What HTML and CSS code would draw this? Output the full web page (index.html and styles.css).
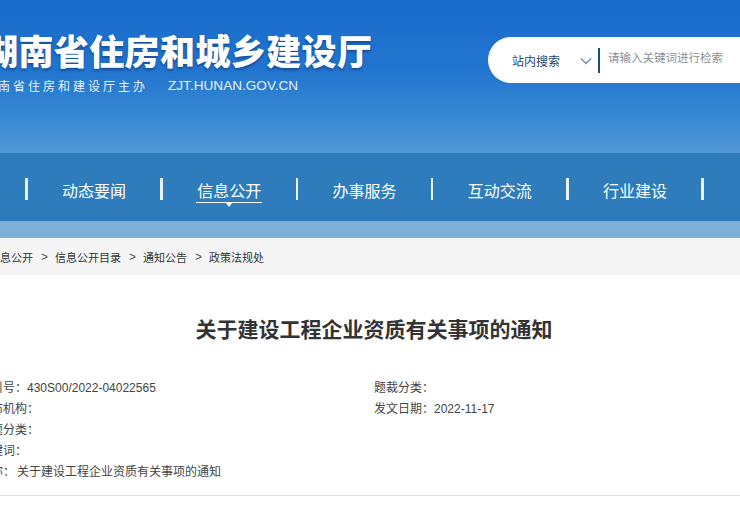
FILE: index.html
```html
<!DOCTYPE html>
<html lang="zh-CN">
<head>
<meta charset="utf-8">
<title>关于建设工程企业资质有关事项的通知</title>
<link rel="stylesheet" href="styles.css">
</head>
<body>
<header class="header">
  <div class="brand">
    <div class="site-title">湖南省住房和城乡建设厅</div>
    <div class="site-sub"><span class="sub-cn">湖南省住房和建设厅主办</span><span class="sub-url">ZJT.HUNAN.GOV.CN</span></div>
  </div>
  <div class="search">
    <span class="scope">站内搜索</span>
    <svg class="chev" width="12" height="8" viewBox="0 0 12 8"><path d="M1 1.5 L6 6.5 L11 1.5" fill="none" stroke="#6f8aa3" stroke-width="1.3"/></svg>
    <span class="divider"></span>
    <span class="placeholder">请输入关键词进行检索</span>
  </div>
</header>
<nav class="nav">
  <span class="sep"></span>
  <a class="nav-item"><span class="nav-text">动态要闻</span></a>
  <span class="sep"></span>
  <a class="nav-item active"><span class="nav-text">信息公开</span></a>
  <span class="sep"></span>
  <a class="nav-item"><span class="nav-text">办事服务</span></a>
  <span class="sep"></span>
  <a class="nav-item"><span class="nav-text">互动交流</span></a>
  <span class="sep"></span>
  <a class="nav-item"><span class="nav-text">行业建设</span></a>
  <span class="sep"></span>
</nav>
<div class="nav-band"></div>
<div class="crumbs">
  <span>信息公开</span><span class="gt">&gt;</span><span>信息公开目录</span><span class="gt">&gt;</span><span>通知公告</span><span class="gt">&gt;</span><span>政策法规处</span>
</div>
<main class="article">
  <h1 class="title">关于建设工程企业资质有关事项的通知</h1>
  <div class="meta">
    <div class="meta-col">
      <div class="row">索引号：<span class="num">430S00/2022-04022565</span></div>
      <div class="row">发布机构：</div>
      <div class="row">主题分类：</div>
      <div class="row">关键词：</div>
      <div class="row">名称：<span class="val">关于建设工程企业资质有关事项的通知</span></div>
    </div>
    <div class="meta-col">
      <div class="row">题裁分类：</div>
      <div class="row">发文日期：<span class="num">2022-11-17</span></div>
    </div>
  </div>
</main>
</body>
</html>
```
FILE: styles.css
```css
html, body {
  margin: 0;
  padding: 0;
  overflow: hidden;
  background: #fff;
  font-family: "Liberation Sans", "Noto Sans CJK SC", sans-serif;
}

.header {
  height: 153px;
  display: flex;
  align-items: flex-start;
  overflow: hidden;
  background: linear-gradient(180deg, #196bcd 0%, #2275ce 45%, #3687d3 75%, #5198d5 100%);
}

.brand {
  margin-left: -17px;
  padding-top: 30px;
}

.site-title {
  font-family: "Noto Sans CJK SC", sans-serif;
  font-weight: 900;
  font-size: 35px;
  line-height: 40px;
  letter-spacing: 0.4px;
  color: #fff;
  text-shadow: 0 2px 3px rgba(10, 45, 110, 0.55);
  white-space: nowrap;
}

.site-sub {
  margin-top: 6px;
  height: 20px;
  line-height: 20px;
  color: #e6f0fb;
  white-space: nowrap;
  display: flex;
  align-items: center;
}

.sub-cn {
  font-family: "Noto Sans CJK SC", sans-serif;
  font-size: 12px;
  letter-spacing: 3px;
}

.sub-url {
  margin-left: 20px;
  font-family: "Liberation Sans", sans-serif;
  font-size: 13.6px;
  letter-spacing: 0;
}

.search {
  margin-left: auto;
  margin-right: -60px;
  margin-top: 37px;
  width: 312px;
  height: 46px;
  flex-shrink: 0;
  box-sizing: border-box;
  background: #fff;
  border-radius: 23px 0 0 23px;
  display: flex;
  align-items: center;
  padding-left: 24px;
  font-family: "Noto Sans CJK SC", sans-serif;
  font-size: 12px;
}

.scope {
  color: #25466d;
  width: 48px;
  white-space: nowrap;
  padding-top: 1px;
}

.chev {
  margin-left: 20px;
  margin-top: 1px;
}

.divider {
  margin-left: 6px;
  width: 2px;
  height: 25px;
  background: #1f4b77;
}

.placeholder {
  margin-left: 8px;
  color: #8a8f96;
  font-size: 11.5px;
  white-space: nowrap;
  padding-bottom: 7px;
}

.nav {
  height: 68px;
  box-sizing: border-box;
  padding-top: 4px;
  padding-left: 25px;
  background: #2e7cbb;
  display: flex;
  align-items: center;
}

.sep {
  width: 2.5px;
  height: 22px;
  background: #e9f2fa;
  flex-shrink: 0;
}

.nav-item {
  width: 132.8px;
  flex-shrink: 0;
  display: flex;
  justify-content: center;
  color: #fff;
  text-decoration: none;
}

.nav-text {
  position: relative;
  display: inline-block;
  font-family: "Noto Sans CJK SC", sans-serif;
  font-size: 16px;
  line-height: 22px;
  padding: 3px 1px 1px;
  border-bottom: 1.5px solid transparent;
  white-space: nowrap;
}

.nav-item.active .nav-text {
  border-bottom-color: #fff;
}

.nav-item.active .nav-text::after {
  content: "";
  position: absolute;
  left: 50%;
  bottom: -5.5px;
  margin-left: -3px;
  border-left: 3px solid transparent;
  border-right: 3px solid transparent;
  border-top: 4px solid #fff;
}

.nav-band {
  height: 17px;
  background: #7db0d8;
}

.crumbs {
  height: 37px;
  background: #f5f5f5;
  display: flex;
  align-items: center;
  font-family: "Noto Sans CJK SC", sans-serif;
  font-size: 11px;
  color: #333;
  white-space: nowrap;
}

.crumbs > span:first-child {
  margin-left: -11px;
}

.gt {
  font-family: "Liberation Sans", sans-serif;
  font-size: 12px;
  margin: 0 7px 0 8px;
  color: #555;
}

.article {
  margin-left: -21px;
  width: 790px;
}

.title {
  margin: 0;
  padding-top: 38px;
  text-align: center;
  font-family: "Noto Sans CJK SC", sans-serif;
  font-weight: 700;
  font-size: 21px;
  line-height: 30px;
  color: #333;
}

.meta {
  margin-top: 33px;
  padding-bottom: 14px;
  border-bottom: 1px solid #dedede;
  display: grid;
  grid-template-columns: 395px 395px;
  font-family: "Noto Sans CJK SC", sans-serif;
  font-size: 12px;
  color: #444;
}

.row {
  height: 21px;
  line-height: 21px;
  white-space: nowrap;
}

.num {
  font-family: "Liberation Sans", sans-serif;
}

.val {
  margin-left: 2px;
}
```
